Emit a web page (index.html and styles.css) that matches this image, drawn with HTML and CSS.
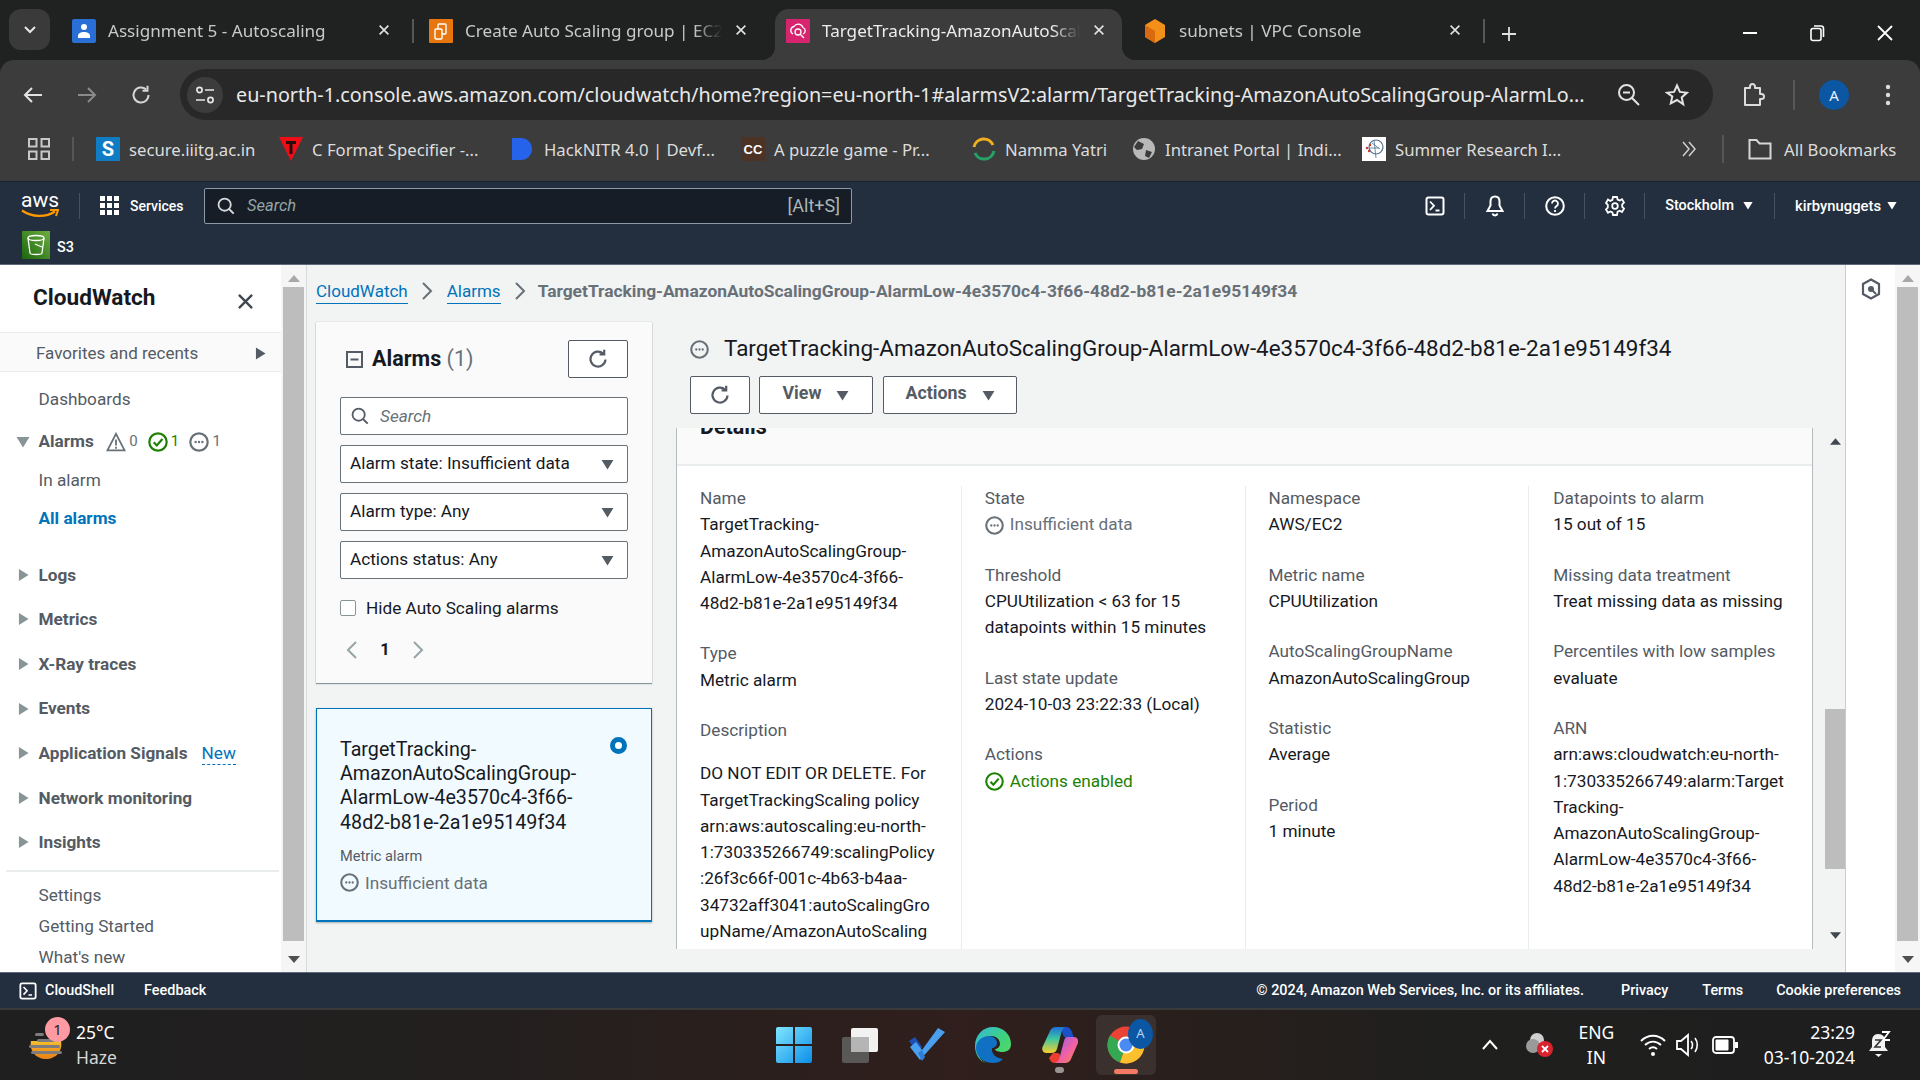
FILE: index.html
```html
<!DOCTYPE html>
<html lang="en">
<head>
<meta charset="utf-8">
<title>CloudWatch alarm</title>
<link rel="stylesheet" href="styles.css">
</head>
<body>
<svg class="defs" aria-hidden="true">
  <symbol id="i-refresh" viewBox="0 0 20 20"><path d="M17.5 10.5a7.5 7.5 0 1 1-2.4-5.9" fill="none" stroke="currentColor" stroke-width="2.2"/><path d="M16.2 0.8v4.6h-4.6" fill="none" stroke="currentColor" stroke-width="2.2"/></symbol>
  <symbol id="i-pending" viewBox="0 0 20 20"><circle cx="10" cy="10" r="8.7" fill="none" stroke="currentColor" stroke-width="2.2"/><circle cx="6.6" cy="10" r="1.2" fill="currentColor"/><circle cx="10" cy="10" r="1.2" fill="currentColor"/><circle cx="13.4" cy="10" r="1.2" fill="currentColor"/></symbol>
  <symbol id="i-ok" viewBox="0 0 20 20"><circle cx="10" cy="10" r="8.7" fill="none" stroke="currentColor" stroke-width="2.2"/><path d="M5.8 10.2l3 3.2 5.6-6.4" fill="none" stroke="currentColor" stroke-width="2.2"/></symbol>
  <symbol id="i-warn" viewBox="0 0 20 20"><path d="M10 1.8L18.6 18.4H1.4z" fill="none" stroke="currentColor" stroke-width="1.8"/><path d="M10 7.5v6M10 14.8v2" stroke="currentColor" stroke-width="1.8"/></symbol>
  <symbol id="i-down" viewBox="0 0 14 12"><path d="M0.5 1h13L7 11.5z" fill="currentColor"/></symbol>
  <symbol id="i-right" viewBox="0 0 12 14"><path d="M1 0.5v13L11.5 7z" fill="currentColor"/></symbol>
  <symbol id="i-x" viewBox="0 0 16 16"><path d="M3 3l10 10M13 3L3 13" stroke="currentColor" stroke-width="1.8" fill="none"/></symbol>
  <symbol id="i-search" viewBox="0 0 20 20"><circle cx="8.5" cy="8.5" r="6.8" fill="none" stroke="currentColor" stroke-width="2"/><path d="M13.5 13.5l5 5" stroke="currentColor" stroke-width="2.2"/></symbol>
  <symbol id="i-shell" viewBox="0 0 20 20"><rect x="1.5" y="1.5" width="17" height="17" rx="2" fill="none" stroke="currentColor" stroke-width="2"/><path d="M5 5.5l4 4.2-4 4.3M10.5 14.5h4" fill="none" stroke="currentColor" stroke-width="1.8"/></symbol>
  <symbol id="i-chev" viewBox="0 0 12 20"><path d="M2 2l8 8-8 8" fill="none" stroke="currentColor" stroke-width="2"/></symbol>
</svg>

<header class="tabstrip">
  <div class="tab-search"><svg width="14" height="10" viewBox="0 0 14 10"><path d="M2 2l5 5 5-5" fill="none" stroke="#e6e6e6" stroke-width="2"/></svg></div>
  <div class="tabs">
    <div class="tab sep">
      <svg class="fav" width="24" height="24" viewBox="0 0 24 24"><rect width="24" height="24" rx="2" fill="#2a6fd6"/><circle cx="12" cy="8" r="3" fill="#fff"/><path d="M6 19v-2c0-3 3-4 6-4s6 1 6 4v2z" fill="#fff"/></svg>
      <span class="tab-title">Assignment 5 - Autoscaling</span>
      <svg class="tab-x" width="14" height="14"><use href="#i-x"/></svg>
    </div>
    <div class="tab">
      <svg class="fav" width="24" height="24" viewBox="0 0 24 24"><rect width="24" height="24" rx="1" fill="#e8760f"/><rect x="9" y="5" width="8" height="10" rx="1" fill="none" stroke="#fff" stroke-width="1.4"/><rect x="6" y="10" width="7" height="10" rx="1" fill="#e8760f" stroke="#fff" stroke-width="1.4"/></svg>
      <span class="tab-title">Create Auto Scaling group | EC2</span>
      <svg class="tab-x" width="14" height="14"><use href="#i-x"/></svg>
    </div>
    <div class="tab active">
      <svg class="fav" width="24" height="24" viewBox="0 0 24 24"><rect width="24" height="24" rx="1" fill="#d6246e"/><path d="M7 15a4 4 0 0 1 1-7.5 5 5 0 0 1 9 1 3.5 3.5 0 0 1 0 6.5" fill="none" stroke="#fff" stroke-width="1.3"/><circle cx="12" cy="13" r="3" fill="none" stroke="#fff" stroke-width="1.3"/><path d="M14 15l4 4" stroke="#fff" stroke-width="1.3"/></svg>
      <span class="tab-title">TargetTracking-AmazonAutoScalingGroup</span>
      <svg class="tab-x" width="14" height="14"><use href="#i-x"/></svg>
    </div>
    <div class="tab sep">
      <svg class="fav" width="24" height="26" viewBox="0 0 24 26"><path d="M12 1l10 6v12l-10 6L2 19V7z" fill="#f39019"/><path d="M12 13L2 7v12l10 6z" fill="#d9690f"/></svg>
      <span class="tab-title">subnets | VPC Console</span>
      <svg class="tab-x" width="14" height="14"><use href="#i-x"/></svg>
    </div>
  </div>
  <svg class="tab-plus" width="16" height="16" viewBox="0 0 16 16"><path d="M8 1v14M1 8h14" stroke="#e0e0e0" stroke-width="1.8"/></svg>
  <div class="winctl">
    <svg width="16" height="16" viewBox="0 0 16 16"><path d="M1 8h14" stroke="#fff" stroke-width="2"/></svg>
    <svg width="16" height="18" viewBox="0 0 16 18"><rect x="2" y="4.5" width="10" height="12" rx="2" fill="none" stroke="#fff" stroke-width="1.6"/><path d="M5 2h7a2.5 2.5 0 0 1 2.5 2.5V13" fill="none" stroke="#fff" stroke-width="1.6"/></svg>
    <svg width="18" height="18" viewBox="0 0 18 18"><path d="M2 2l14 14M16 2L2 16" stroke="#fff" stroke-width="1.8"/></svg>
  </div>
</header>

<nav class="toolbar">
  <div class="tool-btn"><svg width="20" height="18" viewBox="0 0 20 18"><path d="M19 9H2M9 2L2 9l7 7" fill="none" stroke="#e3e3e3" stroke-width="2"/></svg></div>
  <div class="tool-btn"><svg width="20" height="18" viewBox="0 0 20 18"><path d="M1 9h17M11 2l7 7-7 7" fill="none" stroke="#8a8a8a" stroke-width="2"/></svg></div>
  <div class="tool-btn"><svg width="20" height="20" viewBox="0 0 20 20"><path d="M17.5 10a7.5 7.5 0 1 1-2.4-5.5" fill="none" stroke="#d6d6d6" stroke-width="2"/><path d="M16.5 0.8v5h-5" fill="none" stroke="#d6d6d6" stroke-width="2"/></svg></div>
  <div class="omnibox">
    <div class="tune"><svg width="20" height="20" viewBox="0 0 20 20"><circle cx="4.5" cy="5" r="2.6" fill="none" stroke="#e6e6e6" stroke-width="1.7"/><path d="M10 5h9M1 15h9" stroke="#e6e6e6" stroke-width="1.7"/><circle cx="15.5" cy="15" r="2.6" fill="none" stroke="#e6e6e6" stroke-width="1.7"/></svg></div>
    <span class="url">eu-north-1.console.aws.amazon.com/cloudwatch/home?region=eu-north-1#alarmsV2:alarm/TargetTracking-AmazonAutoScalingGroup-AlarmLo...</span>
    <svg class="omni-zoom" width="23" height="23" viewBox="0 0 23 23"><circle cx="9.5" cy="9.5" r="7.5" fill="none" stroke="#e3e3e3" stroke-width="2"/><path d="M6 9.5h7M15 15l7 7" stroke="#e3e3e3" stroke-width="2"/></svg>
    <svg class="omni-star" width="24" height="24" viewBox="0 0 24 24"><path d="M12 2.5l2.9 6.4 7 .8-5.2 4.7 1.5 6.9L12 17l-6.200 3.300 1.500-6.900L2.100 9.700l7-.8z" fill="none" stroke="#e3e3e3" stroke-width="2"/></svg>
  </div>
  <svg class="ext" width="24" height="24" viewBox="0 0 24 24"><path d="M3 5h5V3.500a2.500 2.500 0 0 1 5 0V5h5v6h1.500a2.500 2.500 0 0 1 0 5H18v6H3z" fill="none" stroke="#dcdcdc" stroke-width="2" stroke-linejoin="round"/></svg>
  <span class="vsep"></span>
  <span class="avatar">A</span>
  <svg class="dots" width="6" height="22" viewBox="0 0 6 22"><circle cx="3" cy="3" r="2.200" fill="#dcdcdc"/><circle cx="3" cy="11" r="2.200" fill="#dcdcdc"/><circle cx="3" cy="19" r="2.200" fill="#dcdcdc"/></svg>
</nav>

<nav class="bookmarks">
  <svg class="apps" width="22" height="22" viewBox="0 0 22 22"><g fill="none" stroke="#c8c8c8" stroke-width="2"><rect x="1" y="1" width="7.500" height="7.500"/><rect x="13.500" y="1" width="7.500" height="7.500"/><rect x="1" y="13.500" width="7.500" height="7.500"/><rect x="13.500" y="13.500" width="7.500" height="7.500"/></g></svg>
  <span class="bm-sep"></span>
  <div class="bm-list">
    <div class="bm"><svg width="24" height="24" viewBox="0 0 24 24"><rect width="24" height="24" fill="#0f7cc4"/><text x="12" y="19" class="svg-s">S</text></svg><span>secure.iiitg.ac.in</span></div>
    <div class="bm"><svg width="24" height="24" viewBox="0 0 24 24"><path d="M0 0h24L12 24z" fill="#ef0e18"/><path d="M7 4h10v3h-3.500v10h-3V7H7z" fill="#2b0a0a"/></svg><span>C Format Specifier -...</span></div>
    <div class="bm"><svg width="24" height="24" viewBox="0 0 24 24"><path d="M1 1h9a11 11 0 0 1 0 22H1z" fill="#2563eb"/></svg><span>HackNITR 4.0 | Devf...</span></div>
    <div class="bm"><svg width="24" height="24" viewBox="0 0 24 24"><rect width="24" height="24" fill="#4d3326"/><text x="12" y="17" class="svg-cc">CC</text></svg><span>A puzzle game - Pr...</span></div>
    <div class="bm"><svg width="24" height="24" viewBox="0 0 24 24"><path d="M2 10a10 10 0 0 1 19-2" fill="none" stroke="#f2b01e" stroke-width="3"/><path d="M22 14a10 10 0 0 1-19 2" fill="none" stroke="#26a269" stroke-width="3"/></svg><span>Namma Yatri</span></div>
    <div class="bm"><svg width="24" height="24" viewBox="0 0 24 24"><circle cx="12" cy="12" r="11" fill="#b9b9b9"/><path d="M6 4l6 3-2 5-5 1-3-3zM14 13l6 2-3 6-4-2z" fill="#3c3c3c"/></svg><span>Intranet Portal | Indi...</span></div>
    <div class="bm"><svg width="24" height="24" viewBox="0 0 24 24"><rect width="24" height="24" fill="#fff"/><circle cx="14" cy="10" r="7" fill="none" stroke="#51708f" stroke-width="1.200"/><path d="M10 6l8 6M12 3l2 18M8 11h9" stroke="#51708f" stroke-width=".8"/><circle cx="5" cy="11" r="1.300" fill="#d8362f"/><circle cx="8" cy="8" r="1.200" fill="#d8362f"/><circle cx="7" cy="14" r="1.200" fill="#d8362f"/></svg><span>Summer Research I...</span></div>
  </div>
  <svg class="bm-more" width="14" height="16" viewBox="0 0 14 16"><path d="M1 1l6 7-6 7M7 1l6 7-6 7" fill="none" stroke="#cfcfcf" stroke-width="1.500"/></svg>
  <span class="bm-sep wide"></span>
  <div class="bm all"><svg width="24" height="22" viewBox="0 0 24 22"><path d="M1.500 2h7l3 3.500h11v15h-21z" fill="none" stroke="#d6d6d6" stroke-width="2"/></svg><span>All Bookmarks</span></div>
</nav>

<section class="awsnav">
  <div class="aws-top">
    <div class="aws-logo"><span class="aws-word">aws</span><svg width="38" height="10" viewBox="0 0 38 10"><path d="M1 1.500c10 7 24 7 33 1" fill="none" stroke="#ff9900" stroke-width="2.200"/><path d="M29 1h8l-2 6" fill="none" stroke="#ff9900" stroke-width="2"/></svg></div>
    <span class="nav-sep"></span>
    <div class="services"><svg width="19" height="19" viewBox="0 0 19 19"><g fill="#fff"><rect width="5" height="5"/><rect x="7" width="5" height="5"/><rect x="14" width="5" height="5"/><rect y="7" width="5" height="5"/><rect x="7" y="7" width="5" height="5"/><rect x="14" y="7" width="5" height="5"/><rect y="14" width="5" height="5"/><rect x="7" y="14" width="5" height="5"/><rect x="14" y="14" width="5" height="5"/></g></svg><span>Services</span></div>
    <div class="aws-search"><svg width="18" height="18"><use href="#i-search"/></svg><span class="ph">Search</span><span class="kbd">[Alt+S]</span></div>
    <div class="nav-right">
      <span class="nav-ic"><svg width="20" height="20"><use href="#i-shell"/></svg></span>
      <span class="nav-ic"><svg width="20" height="22" viewBox="0 0 20 22"><path d="M10 1.500c-3 0-4.500 2-4.500 5v4L2.500 16h15l-3-5.500v-4c0-3-1.500-5-4.500-5zM7.500 18.500a2.600 2.600 0 0 0 5 0" fill="none" stroke="#fff" stroke-width="2"/></svg></span>
      <span class="nav-ic"><svg width="20" height="20" viewBox="0 0 20 20"><circle cx="10" cy="10" r="8.800" fill="none" stroke="#fff" stroke-width="2"/><path d="M7 7.500a3 3 0 1 1 4.500 2.600c-1 .6-1.500 1-1.500 2.400M10 14v2" fill="none" stroke="#fff" stroke-width="1.800"/></svg></span>
      <span class="nav-ic"><svg width="20" height="20" viewBox="0 0 20 20"><path d="M8 1h4l.6 2.500 2.200 1 2.200-1.300 2 3.400-1.800 1.800v2.400l1.800 1.800-2 3.400-2.200-1.300-2.200 1L12 19H8l-.6-2.500-2.200-1L3 16.800l-2-3.400 1.800-1.800V8.800L1 7l2-3.400 2.200 1.300 2.200-1z" fill="none" stroke="#fff" stroke-width="1.800"/><circle cx="10" cy="10" r="2.800" fill="none" stroke="#fff" stroke-width="1.800"/></svg></span>
      <span class="nav-txt region">Stockholm<svg width="10" height="9"><use href="#i-down"/></svg></span>
      <span class="nav-txt acct">kirbynuggets<svg width="10" height="9"><use href="#i-down"/></svg></span>
    </div>
  </div>
  <div class="aws-fav">
    <svg width="28" height="28" viewBox="0 0 28 28"><defs><linearGradient id="s3g" x1="0" y1="1" x2="1" y2="0"><stop offset="0" stop-color="#1b660f"/><stop offset="1" stop-color="#6cae3e"/></linearGradient></defs><rect width="28" height="28" fill="url(#s3g)"/><ellipse cx="14" cy="7" rx="8" ry="2.500" fill="none" stroke="#fff" stroke-width="1.300"/><path d="M6 7l2 15c.3 2 12 2 12 0l2-15" fill="none" stroke="#fff" stroke-width="1.300"/><path d="M13 13l7 3" stroke="#fff" stroke-width="1.200"/></svg>
    <span>S3</span>
  </div>
</section>

<main class="console">
  <aside class="sidebar">
    <div class="side-head"><h2>CloudWatch</h2><svg width="21" height="21"><use href="#i-x"/></svg></div>
    <div class="side-fav"><span>Favorites and recents</span><svg width="11" height="13"><use href="#i-right"/></svg></div>
    <ul class="side-list">
      <li class="link h-dash">Dashboards</li>
      <li class="group h-alarms"><svg class="tw" width="14" height="12"><use href="#i-down"/></svg><b>Alarms</b>
        <span class="badges">
          <svg class="c-grey" width="20" height="20"><use href="#i-warn"/></svg><i>0</i>
          <svg class="c-green" width="20" height="20"><use href="#i-ok"/></svg><i class="c-green">1</i>
          <svg class="c-grey" width="20" height="20"><use href="#i-pending"/></svg><i>1</i>
        </span>
      </li>
      <li class="link h-in">In alarm</li>
      <li class="link h-all active">All alarms</li>
      <li class="group sect first"><svg class="tw" width="11" height="14"><use href="#i-right"/></svg><b>Logs</b></li>
      <li class="group sect"><svg class="tw" width="11" height="14"><use href="#i-right"/></svg><b>Metrics</b></li>
      <li class="group sect"><svg class="tw" width="11" height="14"><use href="#i-right"/></svg><b>X-Ray traces</b></li>
      <li class="group sect"><svg class="tw" width="11" height="14"><use href="#i-right"/></svg><b>Events</b></li>
      <li class="group sect"><svg class="tw" width="11" height="14"><use href="#i-right"/></svg><b>Application Signals</b><span class="new">New</span></li>
      <li class="group sect"><svg class="tw" width="11" height="14"><use href="#i-right"/></svg><b>Network monitoring</b></li>
      <li class="group sect"><svg class="tw" width="11" height="14"><use href="#i-right"/></svg><b>Insights</b></li>
      <li class="side-rule"></li>
      <li class="link h-foot">Settings</li>
      <li class="link h-foot">Getting Started</li>
      <li class="link h-foot">What's new</li>
    </ul>
  </aside>
  <div class="sbar left">
    <svg width="12" height="7" viewBox="0 0 12 7"><path d="M6 0l6 7H0z" fill="#a8a8a8"/></svg>
    <span class="thumb"></span>
    <svg width="12" height="7" viewBox="0 0 12 7"><path d="M0 0h12L6 7z" fill="#505050"/></svg>
  </div>

  <div class="content">
    <div class="crumbs">
      <a>CloudWatch</a><svg width="12" height="20"><use href="#i-chev"/></svg><a>Alarms</a><svg class="last" width="12" height="20"><use href="#i-chev"/></svg><span>TargetTracking-AmazonAutoScalingGroup-AlarmLow-4e3570c4-3f66-48d2-b81e-2a1e95149f34</span>
    </div>
    <div class="split">
      <div class="list-col">
        <section class="filter-panel">
          <div class="fp-head">
            <svg class="fp-collapse" width="17" height="17" viewBox="0 0 17 17"><rect x="1" y="1" width="15" height="15" fill="none" stroke="#545b64" stroke-width="2"/><path d="M4.500 8.500h8" stroke="#545b64" stroke-width="2"/></svg>
            <h2>Alarms <em>(1)</em></h2>
            <div class="btn icon"><svg width="20" height="20"><use href="#i-refresh"/></svg></div>
          </div>
          <div class="field search"><svg width="18" height="18"><use href="#i-search"/></svg><span>Search</span></div>
          <div class="field select"><span>Alarm state: Insufficient data</span><svg width="13" height="11"><use href="#i-down"/></svg></div>
          <div class="field select"><span>Alarm type: Any</span><svg width="13" height="11"><use href="#i-down"/></svg></div>
          <div class="field select"><span>Actions status: Any</span><svg width="13" height="11"><use href="#i-down"/></svg></div>
          <label class="check"><span class="box"></span>Hide Auto Scaling alarms</label>
          <div class="pager">
            <svg width="12" height="20"><use href="#i-chev" class="flip"/></svg><b>1</b><svg width="12" height="20"><use href="#i-chev"/></svg>
          </div>
        </section>
        <article class="alarm-card">
          <div class="card-title">TargetTracking-<br>AmazonAutoScalingGroup-<br>AlarmLow-4e3570c4-3f66-<br>48d2-b81e-2a1e95149f34</div>
          <span class="radio"></span>
          <div class="card-type">Metric alarm</div>
          <div class="status grey"><svg width="19" height="19"><use href="#i-pending"/></svg>Insufficient data</div>
        </article>
      </div>

      <div class="detail-col">
        <div class="detail-title"><svg class="c-grey" width="19" height="19"><use href="#i-pending"/></svg><h1>TargetTracking-AmazonAutoScalingGroup-AlarmLow-4e3570c4-3f66-48d2-b81e-2a1e95149f34</h1></div>
        <div class="actions">
          <div class="btn icon"><svg width="20" height="20"><use href="#i-refresh"/></svg></div>
          <div class="btn view"><span>View</span><svg width="13" height="11"><use href="#i-down"/></svg></div>
          <div class="btn act"><span>Actions</span><svg width="13" height="11"><use href="#i-down"/></svg></div>
        </div>
        <div class="detail-wrap">
          <section class="details">
            <div class="details-head"><h2>Details</h2></div>
            <div class="details-grid">
              <div class="col">
                <dl><dt>Name</dt><dd>TargetTracking-<br>AmazonAutoScalingGroup-<br>AlarmLow-4e3570c4-3f66-<br>48d2-b81e-2a1e95149f34</dd></dl>
                <dl><dt>Type</dt><dd>Metric alarm</dd></dl>
                <dl class="desc"><dt>Description</dt><dd>DO NOT EDIT OR DELETE. For<br>TargetTrackingScaling policy<br>arn:aws:autoscaling:eu-north-<br>1:730335266749:scalingPolicy<br>:26f3c66f-001c-4b63-b4aa-<br>34732aff3041:autoScalingGro<br>upName/AmazonAutoScaling</dd></dl>
              </div>
              <div class="col">
                <dl><dt>State</dt><dd class="status grey"><svg width="19" height="19"><use href="#i-pending"/></svg>Insufficient data</dd></dl>
                <dl><dt>Threshold</dt><dd>CPUUtilization &lt; 63 for 15<br>datapoints within 15 minutes</dd></dl>
                <dl><dt>Last state update</dt><dd>2024-10-03 23:22:33 (Local)</dd></dl>
                <dl><dt>Actions</dt><dd class="status green"><svg width="19" height="19"><use href="#i-ok"/></svg>Actions enabled</dd></dl>
              </div>
              <div class="col">
                <dl><dt>Namespace</dt><dd>AWS/EC2</dd></dl>
                <dl><dt>Metric name</dt><dd>CPUUtilization</dd></dl>
                <dl><dt>AutoScalingGroupName</dt><dd>AmazonAutoScalingGroup</dd></dl>
                <dl><dt>Statistic</dt><dd>Average</dd></dl>
                <dl><dt>Period</dt><dd>1 minute</dd></dl>
              </div>
              <div class="col">
                <dl><dt>Datapoints to alarm</dt><dd>15 out of 15</dd></dl>
                <dl><dt>Missing data treatment</dt><dd>Treat missing data as missing</dd></dl>
                <dl><dt>Percentiles with low samples</dt><dd>evaluate</dd></dl>
                <dl><dt>ARN</dt><dd>arn:aws:cloudwatch:eu-north-<br>1:730335266749:alarm:Target<br>Tracking-<br>AmazonAutoScalingGroup-<br>AlarmLow-4e3570c4-3f66-<br>48d2-b81e-2a1e95149f34</dd></dl>
              </div>
            </div>
          </section>
          <div class="inner-bar">
            <svg width="11" height="7" viewBox="0 0 12 7"><path d="M6 0l6 7H0z" fill="#414750"/></svg>
            <span class="thumb"></span>
            <svg width="11" height="7" viewBox="0 0 12 7"><path d="M0 0h12L6 7z" fill="#414750"/></svg>
          </div>
        </div>
      </div>
    </div>
  </div>

  <aside class="rail"><svg width="20" height="22" viewBox="0 0 20 22"><path d="M10 1.500l8 4.500v10l-8 4.500L2 16V6z" fill="none" stroke="#545b64" stroke-width="2.200"/><circle cx="10" cy="11" r="3" fill="#545b64"/><path d="M10 11l5 5" stroke="#545b64" stroke-width="2"/></svg></aside>
  <div class="sbar right">
    <svg width="12" height="7" viewBox="0 0 12 7"><path d="M6 0l6 7H0z" fill="#a8a8a8"/></svg>
    <span class="thumb"></span>
    <svg width="12" height="7" viewBox="0 0 12 7"><path d="M0 0h12L6 7z" fill="#505050"/></svg>
  </div>
</main>

<footer class="aws-footer">
  <div class="shell"><svg width="18" height="18"><use href="#i-shell"/></svg><span>CloudShell</span></div>
  <span class="fb">Feedback</span>
  <span class="copy">© 2024, Amazon Web Services, Inc. or its affiliates.</span>
  <span class="f-privacy">Privacy</span>
  <span class="f-terms">Terms</span>
  <span class="f-cookie">Cookie preferences</span>
</footer>

<footer class="taskbar">
  <div class="weather">
    <div class="w-icon">
      <svg width="38" height="44" viewBox="0 0 38 44"><defs><linearGradient id="sun" x1="0" y1="0" x2="0" y2="1"><stop offset="0" stop-color="#f5c22e"/><stop offset=".55" stop-color="#f0961c"/><stop offset="1" stop-color="#e8841a"/></linearGradient></defs><path d="M4 15h30c2 10-5 18-15 18S2 25 4 15z" fill="url(#sun)"/><g fill="#7d7d7d"><rect x="8" y="7" width="9" height="3" rx="1.500"/><rect x="10" y="13" width="18" height="3" rx="1.500"/><rect x="2" y="19" width="31" height="3" rx="1.500"/><rect x="4" y="25" width="31" height="3" rx="1.500"/></g></svg>
      <span class="w-badge">1</span>
    </div>
    <div class="w-text"><span>25°C</span><span class="dim">Haze</span></div>
  </div>
  <div class="apps-row">
    <svg width="36" height="36" viewBox="0 0 36 36"><defs><linearGradient id="win" x1="0" y1="0" x2="1" y2="1"><stop offset="0" stop-color="#7fe6ff"/><stop offset="1" stop-color="#0c8fe8"/></linearGradient></defs><path d="M0 2a2 2 0 0 1 2-2h15v17H0zM19 0h15a2 2 0 0 1 2 2v15H19zM0 19h17v17H2a2 2 0 0 1-2-2zM19 19h17v15a2 2 0 0 1-2 2H19z" fill="url(#win)"/></svg>
    <svg width="36" height="36" viewBox="0 0 36 36"><rect x="9" y="1" width="27" height="24" rx="2" fill="#f2f2f2"/><rect x="0" y="10" width="27" height="26" rx="2" fill="#5e5e5e" fill-opacity=".9"/><rect x="9" y="10" width="18" height="15" fill="#b5b5b5"/></svg>
    <svg width="36" height="36" viewBox="0 0 36 36"><path d="M0 14l6-4 7 10-4 6z" fill="#1e4fb4"/><path d="M11 33L1 20l6-5 6 8L29 1l7 4z" fill="#4a9fee"/><path d="M9 26l4-3 3 7-3 4z" fill="#2f7fd6"/></svg>
    <svg width="36" height="36" viewBox="0 0 36 36"><defs><linearGradient id="edge" x1="0" y1="0" x2="1" y2="1"><stop offset="0" stop-color="#36b8e0"/><stop offset=".55" stop-color="#3ed37a"/><stop offset="1" stop-color="#5fdc60"/></linearGradient></defs><path d="M18 0c11 0 18 8 18 17 0 6-4 8-9 8-3 0-7-1-7-3 2 0 5-2 5-5 0-5-4-8-9-8C9 9 3 15 3 24c0 5 3 10 8 12C4 34 0 27 0 19 0 8 8 0 18 0z" fill="url(#edge)"/><path d="M1 21c0-7 6-12 13-12 4 0 8 3 8 7 0 3-3 5-5 5-1 6 4 10 11 11-3 3-6 4-10 4C9 36 1 30 1 21z" fill="#0f70c4"/></svg>
    <div class="copilot-slot">
      <svg width="36" height="36" viewBox="0 0 36 36"><defs><linearGradient id="cop" x1="0" y1="0" x2="0" y2="1"><stop offset="0" stop-color="#1d6fd8"/><stop offset=".45" stop-color="#3ec6a0"/><stop offset="1" stop-color="#f7d02c"/></linearGradient><linearGradient id="cop2" x1="0" y1="0" x2="1" y2="1"><stop offset="0" stop-color="#8f5fe8"/><stop offset=".55" stop-color="#f060a8"/><stop offset="1" stop-color="#f78a3c"/></linearGradient></defs><path d="M13 0h11c3 0 5 2 6 5l2 6h-7c-2 0-3-1-4-3l-1-4z" fill="#1a50c8"/><path d="M14 0h9c-2 1-3 3-4 7l-4 15c-1 3-3 4-6 4H4c-3 0-4.500-3-3.500-6L8 4c1-2.500 3-4 6-4z" fill="url(#cop)"/><path d="M11 26h4c2 0 3 1 3 3l1 7h-6c-3 0-5-2-6-5z" fill="#ea3f30"/><path d="M26 10h6c3 0 5 3 4 6l-7 16c-1 2.500-3 4-6 4H13c3-1 4.500-4 5-7l4-15c.5-2.500 2-4 4-4z" fill="url(#cop2)"/></svg>
      <span class="pip"></span>
    </div>
    <div class="chrome-slot">
      <svg width="38" height="38" viewBox="0 0 38 38"><circle cx="19" cy="19" r="18.500" fill="#ea4335"/><path d="M19 19L3 9.500A18.500 18.500 0 0 0 13 36.500z" fill="#34a853"/><path d="M19 19l-6 17.500A18.500 18.500 0 0 0 37.500 19z" fill="#fbc02d"/><circle cx="19" cy="19" r="8.500" fill="#fff"/><circle cx="19" cy="19" r="6.500" fill="#4a8af4"/></svg>
      <span class="chrome-badge">A</span>
      <span class="run-bar"></span>
    </div>
  </div>
  <div class="tray">
    <svg class="t-up" width="18" height="12" viewBox="0 0 18 12"><path d="M2 10l7-8 7 8" fill="none" stroke="#fff" stroke-width="2"/></svg>
    <svg class="t-cloud" width="28" height="26" viewBox="0 0 28 26"><circle cx="12" cy="8" r="7" fill="#cfcfcf"/><circle cx="8" cy="14" r="7" fill="#9a9a9a"/><circle cx="20" cy="17" r="8" fill="#d9232e"/><path d="M17 14l6 6M23 14l-6 6" stroke="#fff" stroke-width="1.800"/></svg>
    <div class="t-lang"><span>ENG</span><span>IN</span></div>
    <svg class="t-wifi" width="26" height="24" viewBox="0 0 26 24"><path d="M1 8c7-7 17-7 24 0M5 12c5-4.500 11-4.500 16 0M9 16c2.500-2.200 5.500-2.200 8 0" fill="none" stroke="#fff" stroke-width="2"/><circle cx="13" cy="21" r="2" fill="#fff"/></svg>
    <svg class="t-vol" width="26" height="24" viewBox="0 0 26 24"><path d="M2 8h4l7-6v20l-7-6H2z" fill="none" stroke="#fff" stroke-width="1.800"/><path d="M16 8c2 2 2 6 0 8M20 5c3 4 3 10 0 14" fill="none" stroke="#fff" stroke-width="1.600"/></svg>
    <svg class="t-batt" width="26" height="18" viewBox="0 0 26 18"><rect x="1" y="1" width="21" height="16" rx="3" fill="none" stroke="#fff" stroke-width="1.800"/><rect x="3.500" y="3.500" width="13" height="11" rx="1" fill="#fff"/><rect x="23" y="6" width="3" height="6" fill="#fff"/></svg>
    <div class="t-clock"><span>23:29</span><span>03-10-2024</span></div>
    <svg class="t-bell" width="24" height="28" viewBox="0 0 24 28"><path d="M11 3c-4 0-6 3-6 7v6l-3 4h19l-3-4v-6c0-4-2-7-7-7zM8 23h7l-3.500 3z" fill="#f2f2f2"/><path d="M15 1h7l-6 8h7" fill="none" stroke="#fff" stroke-width="1.800"/><path d="M8 9h6l-6 7h6" fill="none" stroke="#333" stroke-width="1.600"/></svg>
  </div>
</footer>
</body>
</html>
```

FILE: styles.css
```css
* { box-sizing: border-box; }
html, body { margin: 0; padding: 0; }
body { width: 1920px; height: 1080px; overflow: hidden; font-family: Roboto, "Liberation Sans", sans-serif; background: #202221; color: #16191f; }
ul, dl, dd, h1, h2 { margin: 0; padding: 0; }
ul { list-style: none; }
svg { display: block; flex: none; }
.defs { width: 0; height: 0; position: absolute; }
.svg-s { font: 700 20px Roboto, sans-serif; fill: #fff; text-anchor: middle; }
.svg-cc { font: 700 13px "Liberation Sans", sans-serif; fill: #fff; text-anchor: middle; }

/* browser tabs */
.tabstrip { height: 60px; display: flex; align-items: flex-end; background: #202221; font-family: "Noto Sans", sans-serif; color: #c9c9c9; }
.tab-search { width: 41px; height: 41px; margin: 0 10px 10px 9px; background: #3a3a3a; border-radius: 12px; display: flex; align-items: center; justify-content: center; }
.tabs { display: grid; grid-template-columns: repeat(4, 357px); height: 51px; }
.tab { position: relative; display: flex; align-items: center; padding: 0 26px 8px 12px; gap: 12px; font-size: 17.1px; }
.tab .tab-x { margin-top: -2px; }
.tab.sep::after { content: ""; position: absolute; right: 3px; top: 10px; height: 24px; width: 2px; background: #565656; }
.tab.active { background: #3c3c3c; border-radius: 14px 14px 0 0; margin: 0 9px 0 1px; padding: 0 16px 8px 11px; color: #ececec; }
.tab.active::before, .tab.active::after { content: ""; position: absolute; bottom: 0; width: 14px; height: 14px; }
.tab.active::before { left: -14px; background: radial-gradient(circle at 0 0, transparent 14px, #3c3c3c 14.5px); }
.tab.active::after { right: -14px; background: radial-gradient(circle at 100% 0, transparent 14px, #3c3c3c 14.5px); }
.tab-title { flex: 1; min-width: 0; white-space: nowrap; overflow: hidden; -webkit-mask-image: linear-gradient(90deg, #000 calc(100% - 28px), transparent); mask-image: linear-gradient(90deg, #000 calc(100% - 28px), transparent); }
.tab-x { color: #e3e3e3; }
.tab-plus { margin: 0 0 18px 13px; }
.winctl { margin-left: auto; margin-bottom: 18px; display: flex; align-items: center; gap: 51px; padding-right: 26px; }

/* browser toolbar */
.toolbar { height: 60px; background: #3c3c3c; padding: 9px 0 0 6px; display: flex; align-items: center; border-radius: 14px 14px 0 0; font-family: "Noto Sans", sans-serif; }
.tool-btn { width: 54px; display: flex; justify-content: center; }
.omnibox { width: 1533px; height: 51px; margin-left: 12px; background: #282828; border-radius: 26px; display: flex; align-items: center; padding-left: 7px; }
.tune { width: 36px; height: 36px; border-radius: 50%; background: #3c3c3c; display: flex; align-items: center; justify-content: center; }
.url { margin-left: 13px; width: 1352px; white-space: nowrap; overflow: hidden; font-size: 19.75px; color: #e8e8e8; }
.omni-zoom { margin-left: 29px; }
.omni-star { margin-left: 25px; }
.ext { margin-left: 29px; }
.vsep { width: 2px; height: 30px; background: #585858; margin-left: 27px; }
.avatar { width: 30px; height: 30px; border-radius: 50%; background: #0b57a4; color: #e8f0ff; font-size: 15px; display: flex; align-items: center; justify-content: center; margin-left: 24px; }
.dots { margin-left: 36px; }

/* bookmarks */
.bookmarks { height: 61px; background: #3c3c3c; display: flex; align-items: center; padding: 0 0 3px 28px; font-family: "Noto Sans", sans-serif; font-size: 16.7px; color: #dcdcdc; }
.bm-sep { width: 2px; height: 24px; background: #565656; margin-left: 22px; }
.bm-sep.wide { height: 28px; margin-left: 26px; }
.bm-list { display: grid; grid-template-columns: 183px 232px 230px 231px 160px 230px 198px; margin-left: 22px; }
.bm { display: flex; align-items: center; gap: 9px; white-space: nowrap; }
.bm.all { margin-left: 24px; gap: 12px; }
.bm-more { margin-left: 122px; }

/* aws nav */
.awsnav { height: 84px; background: #232f3e; color: #fff; border-top: 1px solid #1a232e; border-bottom: 1px solid #5f6b7a; font-size: 14.4px; font-weight: 500; }
.aws-top { height: 43px; display: flex; align-items: center; padding: 4px 0 0 21px; }
.aws-logo { width: 38px; display: flex; flex-direction: column; align-items: center; }
.aws-word { font-size: 21px; line-height: 17px; font-weight: 400; }
.nav-sep { width: 1px; height: 26px; background: #475260; margin-left: 20px; }
.services { display: flex; align-items: center; gap: 11px; margin-left: 20px; width: 104px; font-size: 14px; }
.aws-search { width: 648px; height: 36px; background: #161d26; border: 1px solid #8d99a8; border-radius: 2px; display: flex; align-items: center; padding: 0 11px 0 12px; color: #d5dbdb; font-weight: 400; }
.aws-search .ph { margin-left: 12px; font-style: italic; font-size: 16.5px; color: #95a5a6; }
.aws-search .kbd { margin-left: auto; font-size: 18px; color: #aab7b8; }
.nav-right { margin-left: auto; display: flex; align-items: center; height: 26px; }
.nav-ic { width: 60px; height: 26px; display: flex; align-items: center; justify-content: center; border-right: 1px solid #475260; }
.nav-txt { display: flex; align-items: center; gap: 9px; height: 26px; white-space: nowrap; }
.region { padding: 0 21px 0 20px; border-right: 1px solid #475260; }
.acct { padding: 0 23px 0 20px; gap: 6px; font-size: 14.8px; }
.aws-fav { height: 39px; display: flex; align-items: flex-start; padding: 6px 0 0 22px; gap: 7px; }
.aws-fav span { line-height: 33px; }

/* console layout */
.console { height: 707px; display: flex; background: #f2f3f3; font-size: 17.2px; line-height: 26.25px; }
.sidebar { width: 281px; flex: none; background: #fff; overflow: hidden; color: #545b64; }
.side-head { height: 67px; display: flex; align-items: center; justify-content: space-between; padding: 0 25px 0 33px; color: #16191f; }
.side-head h2 { font-size: 22.6px; font-weight: 700; }
.side-head svg { color: #414750; margin-top: 6px; }
.side-fav { height: 40px; background: #fafafa; border: solid #eaeded; border-width: 1px 0; display: flex; align-items: center; justify-content: space-between; padding: 2px 15px 0 36px; font-size: 17px; }
.side-fav svg { color: #545b64; }
.side-list { padding-top: 8.5px; }
.link { padding-left: 38.5px; display: flex; align-items: center; }
.h-dash { height: 38px; }
.h-in { height: 32px; }
.h-all { height: 44px; }
.h-foot { height: 31px; }
.link.active { color: #0073bb; font-weight: 700; }
.group { display: flex; align-items: center; position: relative; padding-left: 38.5px; }
.group b { font-weight: 700; }
.group .tw { position: absolute; left: 18px; color: #879596; }
.h-alarms { height: 46px; }
.h-alarms .tw { left: 16px; }
.sect { height: 44.6px; }
.sect.first { margin-top: 12px; }
.badges { display: flex; align-items: center; gap: 3px; margin-left: 12.4px; font-size: 15px; }
.badges i { font-style: normal; width: 9px; margin-right: 6.6px; color: #687078; }
.badges i.c-green { color: #1d8102; }
.c-grey { color: #687078; }
.c-green { color: #1d8102; }
.new { margin-left: 14px; color: #0073bb; border-bottom: 1px dashed #0073bb; line-height: 22px; }
.side-rule { height: 2px; margin: 5px 2px 8px 6px; background: #eaeded; }

/* fake scrollbars */
.sbar { width: 25px; flex: none; background: #f5f5f5; display: flex; flex-direction: column; align-items: center; }
.sbar svg { margin: 10px 0 5px; }
.sbar .thumb { width: 21px; flex: 1; background: #bdbdbd; }
.sbar svg:last-child { margin: 15px 0 9px; }
.sbar.left { border-right: 1px solid #d5dbdb; width: 26px; }
.sbar.right { background: #f6f6f6; }

/* content */
.content { flex: 1; min-width: 0; padding: 13px 0 0 9px; border-right: 1px solid #c6cdd0; }
.crumbs { display: flex; align-items: center; height: 26px; font-size: 17px; }
.crumbs a { color: #0073bb; border-bottom: 1px solid #0073bb; line-height: 24px; }
.crumbs svg { color: #687078; margin: 0 13.5px; }
.crumbs svg.last { margin-right: 11.5px; }
.crumbs span { color: #687078; font-weight: 700; font-size: 17.4px; }
.split { display: flex; gap: 24px; margin-top: 18px; }
.list-col { width: 336px; flex: none; }
.filter-panel { height: 361px; background: #fafafa; box-shadow: 0 1px 1px rgba(0,28,36,.4), 0 0 1px rgba(0,28,36,.25); padding: 18px 24px 0; }
.fp-head { display: flex; align-items: center; height: 38px; padding-left: 6px; }
.fp-head h2 { font-size: 21.500px; font-weight: 700; margin-left: 9px; }
.fp-head em { font-style: normal; font-weight: 400; color: #687078; }
.fp-head .btn { margin-left: auto; }
.btn { background: #fff; border: 1px solid #545b64; border-radius: 2px; color: #545b64; display: flex; align-items: center; justify-content: center; font-weight: 700; height: 38px; }
.btn.icon { width: 60px; }
.field { height: 38px; background: #fff; border: 1px solid #687078; border-radius: 2px; display: flex; align-items: center; margin-top: 10px; padding: 0 9px; }
.field.search { margin-top: 19px; padding-left: 10px; color: #687078; }
.field.search svg { margin-right: 11px; color: #545b64; }
.field.search span { font-style: italic; }
.field.select { justify-content: space-between; padding: 0 13px 2px 9px; }
.field.select svg { color: #545b64; margin-top: 2px; }
.check { display: flex; align-items: center; gap: 10px; margin-top: 15.5px; }
.box { width: 16px; height: 16px; background: #fff; border: 1px solid #879596; border-radius: 2px; }
.pager { display: flex; align-items: center; margin-top: 16.5px; padding-left: 6px; color: #95a5a6; }
.pager b { width: 54px; text-align: center; color: #16191f; font-weight: 700; font-size: 16.500px; }
.flip { transform: translate(12px, 0) scaleX(-1); }
.alarm-card { position: relative; height: 214px; margin-top: 25px; background: #f1faff; border: 2px solid #0073bb; border-width: 1px 1px 2px; padding: 29px 23px 0; box-shadow: 0 1px 2px rgba(0,28,36,.3); }
.card-title { font-size: 19.7px; line-height: 24.2px; }
.radio { position: absolute; top: 28px; right: 24px; width: 17px; height: 17px; border-radius: 50%; background: #fff; border: 5px solid #0073bb; }
.card-type { font-size: 14.6px; line-height: 20px; color: #545b64; margin-top: 11px; }
.status { display: flex; align-items: center; gap: 6px; }
.card-type + .status { margin-top: 4px; }
.status.grey { color: #687078; }
.status.green { color: #1d8102; }

.detail-col { flex: 1; min-width: 0; }
.detail-title { height: 54px; display: flex; align-items: center; padding-left: 14px; gap: 15px; }
.detail-title h1 { font-size: 22.45px; font-weight: 400; white-space: nowrap; line-height: 30px; margin-bottom: 2px; }
.actions { display: flex; gap: 9px; padding-left: 14px; height: 38px; margin-bottom: 14px; }
.btn.view, .btn.act { font-size: 17.8px; gap: 15px; }
.btn.view span, .btn.act span { margin-bottom: 3px; }
.btn.view { width: 114px; }
.btn.act { width: 134px; margin-left: 1px; }
.detail-wrap { display: flex; height: 521px; }
.details { width: 1137px; flex: none; background: #fff; border: solid #b4bcbf; border-width: 0 1px; overflow: hidden; }
.details-head { height: 38px; background: #fafafa; border-bottom: 2px solid #eaeded; overflow: hidden; padding-left: 23px; }
.details-head h2 { font-size: 21.500px; font-weight: 700; line-height: 26px; margin-top: -14px; }
.details-grid { display: grid; grid-template-columns: repeat(4, 1fr); margin-top: 20px; height: 463px; }
.col { padding-left: 23px; border-left: 1px solid #eaeded; overflow: hidden; white-space: nowrap; }
.col:first-child { border-left: 0; }
.col:last-child { padding-left: 24px; }
dl { margin: -1px 0 25.2px; }
dt { color: #545b64; }
.desc dd { margin-top: 17px; }
dd.status svg { margin-top: 2px; }
.inner-bar { flex: 1; display: flex; flex-direction: column; align-items: flex-end; padding-top: 10px; }
.inner-bar svg { margin-right: 4px; }
.inner-bar svg:first-child { margin-right: 4px; }
.inner-bar .thumb { width: 20px; height: 160px; background: #bdbdbd; margin: 264px 0 0; }
.inner-bar svg:last-child { margin-top: 63px; }
.rail { width: 49px; flex: none; background: #fff; display: flex; justify-content: center; padding-top: 13px; }

/* aws footer */
.aws-footer { height: 36px; background: #232f3e; color: #fff; border-top: 1px solid #5f6b7a; display: flex; align-items: center; font-size: 14.4px; font-weight: 500; padding-left: 19px; }
.shell { display: flex; align-items: center; gap: 8px; }
.fb { margin-left: 30px; }
.copy { margin-left: auto; }
.f-privacy { margin-left: 37px; }
.f-terms { margin-left: 34px; }
.f-cookie { margin: 0 19px 0 33px; }

/* windows taskbar */
.taskbar { height: 72px; display: flex; align-items: center; border-top: 2px solid #3a3a3a; background: linear-gradient(90deg, #1f1f1f 0%, #231f1f 25%, #301f1c 50%, #2b1f1c 58%, #1f1f1e 75%, #1e1e1e 100%); color: #fff; font-family: "Noto Sans", sans-serif; font-size: 17.500px; line-height: 25px; }
.weather { width: 776px; flex: none; display: flex; align-items: center; padding-left: 27px; }
.w-icon { position: relative; width: 38px; height: 44px; margin-top: 6px; }
.w-badge { position: absolute; top: -9px; left: 18px; width: 25px; height: 25px; border-radius: 50%; background: #ff9aa2; color: #222; font-size: 15px; line-height: 25px; text-align: center; }
.w-text { display: flex; flex-direction: column; margin: -1px 0 0 11px; }
.dim { color: #d6d6d6; }
.apps-row { display: flex; align-items: center; gap: 30.4px; }
.copilot-slot { position: relative; width: 36px; height: 36px; }
.pip { position: absolute; left: 13px; top: 40px; width: 9px; height: 6px; border-radius: 3px; background: #9a9492; }
.chrome-slot { position: relative; width: 60px; height: 60px; margin-left: -12px; background: #3a302e; border-radius: 6px; display: flex; align-items: center; justify-content: center; }
.chrome-badge { position: absolute; top: 4px; right: 3px; width: 25px; height: 30px; border-radius: 50%; background: #0b57a4; font-size: 13px; line-height: 28px; text-align: center; color: #b8d4f4; }
.run-bar { position: absolute; bottom: 1px; left: 18px; width: 24px; height: 5px; border-radius: 3px; background: #f47a63; }
.tray { margin-left: auto; display: flex; align-items: center; }
.t-up { margin-right: 26px; }
.t-cloud { margin-right: 24px; }
.t-lang { width: 38px; display: flex; flex-direction: column; align-items: center; margin-right: 24.5px; }
.t-wifi { margin-right: 8.7px; }
.t-vol { margin-right: 11.5px; }
.t-clock { display: flex; flex-direction: column; align-items: flex-end; margin: 0 12px 0 25.5px; }
.t-bell { margin-right: 29px; }
```
